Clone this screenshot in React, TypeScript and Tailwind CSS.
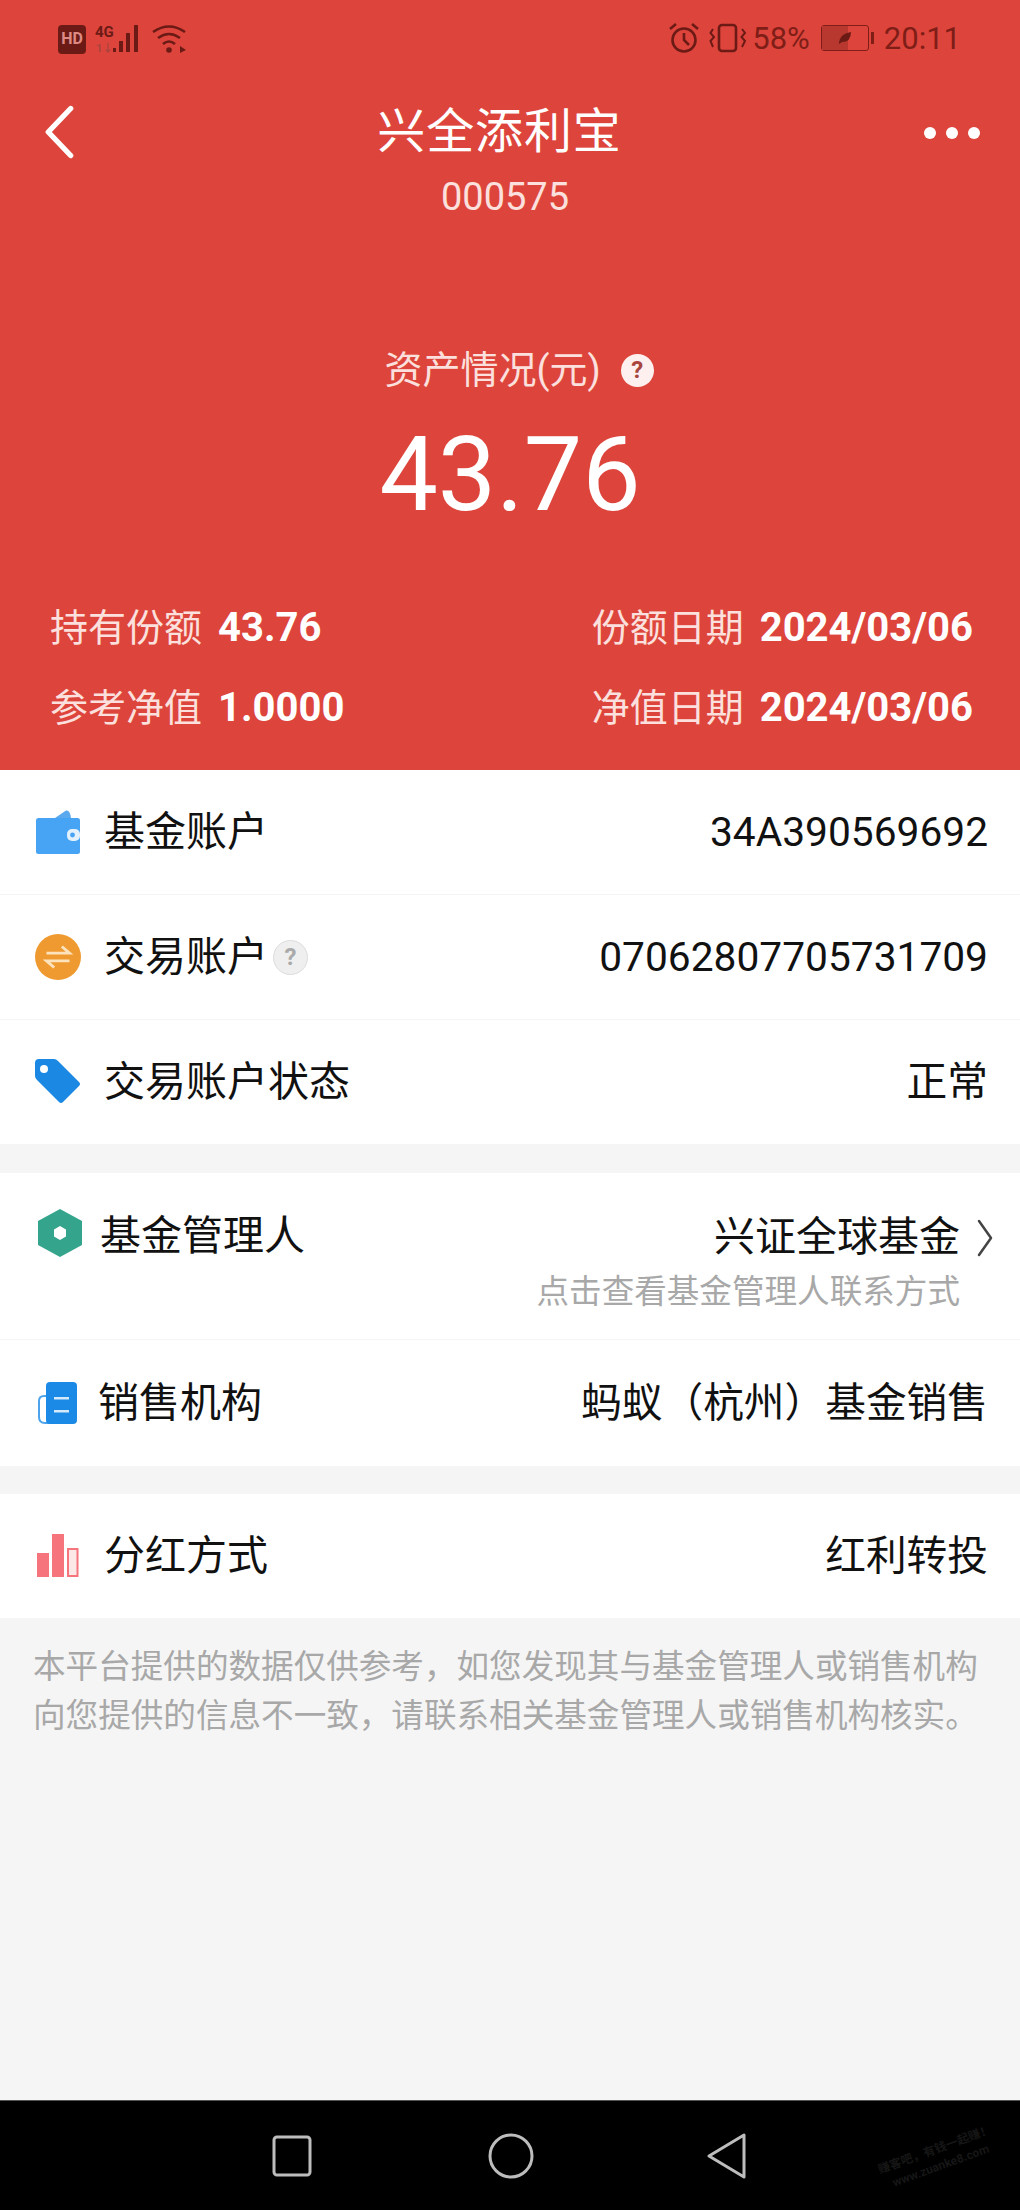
const FONT = 'font-["Roboto","Noto_Sans_CJK_SC",sans-serif]'

function WalletIcon() {
  return (
    <svg width="46" height="46" viewBox="0 0 46 46">
      <path d="M20 9 L31 1.5 Q35 0.5 36 9 Z" fill="#5aa9ee" />
      <rect x="1" y="9" width="44" height="36" rx="2.5" fill="#47a3f3" />
      <rect x="32" y="20" width="13" height="12" rx="5" fill="#e3f1fd" />
      <circle cx="37.5" cy="26" r="2.4" fill="#47a3f3" />
    </svg>
  )
}

function SwapIcon() {
  return (
    <svg width="48" height="50" viewBox="0 0 48 50">
      <circle cx="24" cy="25" r="24" fill="#ef9a30" />
      <path d="M12 21 H36 L28 14" fill="none" stroke="#fde3bd" strokeWidth="3" />
      <path d="M36 29 H12 L20 36" fill="none" stroke="#fde3bd" strokeWidth="3" />
    </svg>
  )
}

function TagIcon() {
  return (
    <svg width="46" height="46" viewBox="0 0 46 46">
      <path d="M4 0 H19 Q21 0 23 2 L44 23 Q46 25 44 27 L28 43 Q26 45 24 43 L2 21 Q0 19 0 17 V4 Q0 0 4 0 Z" fill="#1b88e3" />
      <circle cx="9" cy="10" r="4" fill="#fff" />
    </svg>
  )
}

function HexIcon() {
  return (
    <svg width="46" height="50" viewBox="0 0 46 50">
      <path d="M23 1 L45 13 V37 L23 49 L1 37 V13 Z" fill="#34a58c" />
      <path d="M23 18 L29 21.5 V28.5 L23 32 L17 28.5 V21.5 Z" fill="#fff" />
    </svg>
  )
}

function BookIcon() {
  return (
    <svg width="42" height="44" viewBox="0 0 42 44">
      <path d="M10 15 H7 Q2 15 2 20 V36 Q2 42 8 42 H14" fill="none" stroke="#4ea4ec" strokeWidth="2" />
      <rect x="9" y="1" width="31" height="42" rx="4" fill="#1a8ae6" />
      <rect x="17" y="16" width="15" height="2.5" fill="#d4e9fb" />
      <rect x="17" y="29" width="15" height="2.5" fill="#d4e9fb" />
    </svg>
  )
}

function BarsIcon() {
  return (
    <svg width="42" height="44" viewBox="0 0 42 44">
      <rect x="0" y="19" width="12" height="24" fill="#f6757d" />
      <rect x="15" y="0" width="12" height="43" fill="#f6757d" />
      <rect x="31" y="15" width="9.5" height="27" fill="#fde8e8" stroke="#f6757d" strokeWidth="2" />
    </svg>
  )
}

function Row({ icon, label, value, height = 'h-[124px]', gap = 'gap-[23px]', extra }: {
  icon: React.ReactNode
  label: string
  value: string
  height?: string
  gap?: string
  extra?: React.ReactNode
}) {
  return (
    <div className={`flex items-center justify-between bg-white pl-[35px] pr-[32px] ${height}`}>
      <div className={`flex items-center ${gap}`}>
        <span className="flex w-[46px] justify-center">{icon}</span>
        <span className="flex items-center gap-[5px]">
          {label}
          {extra}
        </span>
      </div>
      <span className="text-[40.7px]">{value}</span>
    </div>
  )
}

function Stat({ label, value }: { label: string; value: string }) {
  return (
    <div className="flex h-[40px] items-center gap-[16px]">
      <span className="text-[38px] text-[#fbe0dd]">{label}</span>
      <span className="text-[40px] font-bold text-white">{value}</span>
    </div>
  )
}

export default function App() {
  return (
    <div className={`${FONT} flex h-[2210px] w-[1020px] flex-col overflow-hidden bg-[#f5f5f5] text-[41px] leading-none text-[#111]`}>
      {/* Header */}
      <div className="h-[770px] shrink-0 bg-[#dd453c]">
        {/* Status bar */}
        <div className="flex h-[54px] items-end justify-between pl-[58px] pr-[59px] text-[#7a1a14]">
          <div className="flex items-center gap-[9px]">
            <span className="flex h-[29px] w-[28px] items-center justify-center rounded-[4px] bg-[#6b1a15] text-[16px] font-bold text-[#dd8a84]">HD</span>
            <svg width="48" height="30" viewBox="0 0 48 30" className="text-[#6b1a15]">
              <text x="0" y="13" fontSize="15" fontWeight="700" fill="currentColor">4G</text>
              <text x="1" y="28" fontSize="11" fontWeight="700" fill="#a9433c">1↓</text>
              <rect x="18" y="24" width="3" height="4" fill="currentColor" />
              <rect x="24" y="17" width="4" height="11" fill="currentColor" />
              <rect x="31" y="9" width="4" height="19" fill="currentColor" />
              <rect x="39" y="1" width="4" height="27" fill="currentColor" />
            </svg>
            <svg width="36" height="30" viewBox="0 0 36 30" fill="none" stroke="#6b1a15" strokeWidth="2.6">
              <path d="M1 8 Q17 -3 33 8" />
              <path d="M6 14 Q17 6 28 14" />
              <path d="M11 20 Q17 15 23 20" />
              <circle cx="17" cy="26" r="2.8" fill="#6b1a15" stroke="none" />
              <path d="M28 22 L34 26 L28 29 Z" fill="#6b1a15" stroke="none" />
            </svg>
          </div>
          <div className="flex items-center text-[31px]">
            <svg width="32" height="32" viewBox="0 0 32 32" fill="none" stroke="#6b1a15" strokeWidth="2.6" className="mr-[9px]">
              <circle cx="16" cy="18" r="11.5" />
              <path d="M16 11 V18 L21 23" />
              <path d="M2 7 L8 2 M30 7 L24 2" />
            </svg>
            <svg width="38" height="30" viewBox="0 0 38 30" fill="none" stroke="#6b1a15" strokeWidth="2.6" className="mr-[5px]">
              <rect x="10" y="2" width="17" height="26" rx="3" />
              <path d="M4 6 L1.5 10 L5 14 L1.5 18 L4 24 M33 6 L36 10 L32.5 14 L36 18 L33 24" strokeWidth="2" />
            </svg>
            <span className="text-[#7f1d17]">58%</span>
            <span className="relative ml-[11px] flex h-[26px] w-[48px] items-center justify-center rounded-[3px] border border-[#7f1d17]">
              <span className="absolute inset-y-0 left-0 w-[26px] bg-[#b8372f]" />
              <svg width="14" height="14" viewBox="0 0 14 14" className="relative">
                <path d="M1 13 Q1 3 13 1 Q13 11 4 11 Z" fill="#6b1a15" />
              </svg>
            </span>
            <span className="ml-[2px] mr-[10px] h-[12px] w-[3px] bg-[#7f1d17]" />
            <span className="text-[#7f1d17]">20:11</span>
          </div>
        </div>

        {/* Nav */}
        <div className="relative mt-[54px] text-white">
          <svg width="32" height="54" viewBox="0 0 30 50" className="absolute left-[44px] top-[-3px]" fill="none" stroke="currentColor" strokeWidth="5" strokeLinecap="round" strokeLinejoin="round">
            <path d="M25 3 L4 25 L25 47" />
          </svg>
          <div className="flex justify-center pr-[21px]">
            <span className="text-[48px] tracking-[0.9px]">兴全添利宝</span>
          </div>
          <div className="mt-[22px] pr-[10px] text-center text-[38px] text-[#fbe0dd]">000575</div>
          <div className="absolute right-[40px] top-[19px] flex gap-[10px]">
            <span className="h-[12px] w-[12px] rounded-full bg-white" />
            <span className="h-[12px] w-[12px] rounded-full bg-white" />
            <span className="h-[12px] w-[12px] rounded-full bg-white" />
          </div>
        </div>

        {/* Assets */}
        <div className="mt-[135px] flex items-center justify-center gap-[20px] pl-[18px] text-[38px] text-[#fbe0dd]">
          资产情况(元)
          <span className="flex h-[33px] w-[33px] items-center justify-center rounded-full bg-[#fdf0ee] text-[24px] font-bold text-[#a8453d]">?</span>
        </div>
        <div className="mt-[34px] text-center text-[104px] text-white">43.76</div>

        {/* Stats */}
        <div className="mt-[81px] grid grid-cols-[1fr_auto] gap-y-[40px] pl-[50px] pr-[47px]">
          <Stat label="持有份额" value="43.76" />
          <Stat label="份额日期" value="2024/03/06" />
          <Stat label="参考净值" value="1.0000" />
          <Stat label="净值日期" value="2024/03/06" />
        </div>
      </div>

      {/* Accounts */}
      <div className="flex flex-col gap-[1px]">
        <Row icon={<WalletIcon />} label="基金账户" value="34A390569692" />
        <Row
          icon={<SwapIcon />}
          label="交易账户"
          value="07062807705731709"
          extra={
            <span className="flex h-[35px] w-[35px] items-center justify-center rounded-full border border-[#ddd] bg-[#efefef] text-[24px] font-bold text-[#aaa]">?</span>
          }
        />
        <Row icon={<TagIcon />} label="交易账户状态" value="正常" />
      </div>

      {/* Manager */}
      <div className="mt-[29px] flex flex-col gap-[1px]">
        <div className="h-[166px] bg-white pl-[37px] pr-[27px] pt-[35px]">
          <div className="flex items-start justify-between">
            <div className="flex items-center gap-[17px]">
              <HexIcon />
              <span className="mt-[6px]">基金管理人</span>
            </div>
            <div className="mt-[9px] flex items-center gap-[17px]">
              兴证全球基金
              <svg width="16" height="38" viewBox="0 0 16 38" fill="none" stroke="#444" strokeWidth="2.5" strokeLinecap="round" strokeLinejoin="round">
                <path d="M2 2 L14 19 L2 36" />
              </svg>
            </div>
          </div>
          <div className="mr-[33px] mt-[18px] text-right text-[32.6px] text-[#a8a8a8]">点击查看基金管理人联系方式</div>
        </div>
        <Row icon={<BookIcon />} label="销售机构" value="蚂蚁（杭州）基金销售" height="h-[126px]" gap="gap-[17px]" />
      </div>

      {/* Dividend */}
      <div className="mt-[28px]">
        <Row icon={<BarsIcon />} label="分红方式" value="红利转投" />
      </div>

      <p className="mt-[25px] px-[33px] text-[32.6px] leading-[49px] text-[#a8a8a8]">
        本平台提供的数据仅供参考，如您发现其与基金管理人或销售机构向您提供的信息不一致，请联系相关基金管理人或销售机构核实。
      </p>

      {/* Android nav bar */}
      <div className="relative mt-auto flex h-[110px] shrink-0 items-center border-t border-[#555] bg-black pl-[272px]">
        <svg width="40" height="42" viewBox="0 0 40 42" fill="none" stroke="#bdbdbd" strokeWidth="3">
          <rect x="2" y="2" width="36" height="38" rx="3" />
        </svg>
        <svg width="46" height="46" viewBox="0 0 46 46" fill="none" stroke="#bdbdbd" strokeWidth="3" className="ml-[176px]">
          <circle cx="23" cy="23" r="21" />
        </svg>
        <svg width="40" height="46" viewBox="0 0 40 46" fill="none" stroke="#bdbdbd" strokeWidth="3" strokeLinejoin="round" className="ml-[173px]">
          <path d="M37 2 V44 L2 23 Z" />
        </svg>
        {/* Watermark */}
        <div className="absolute right-[22px] top-[40px] -rotate-[20deg] text-center text-[12px] font-bold leading-[17px] whitespace-nowrap text-[#161616]">
          赚客吧，有钱一起赚！
          <br />
          www.zuanke8.com
        </div>
      </div>
    </div>
  )
}
